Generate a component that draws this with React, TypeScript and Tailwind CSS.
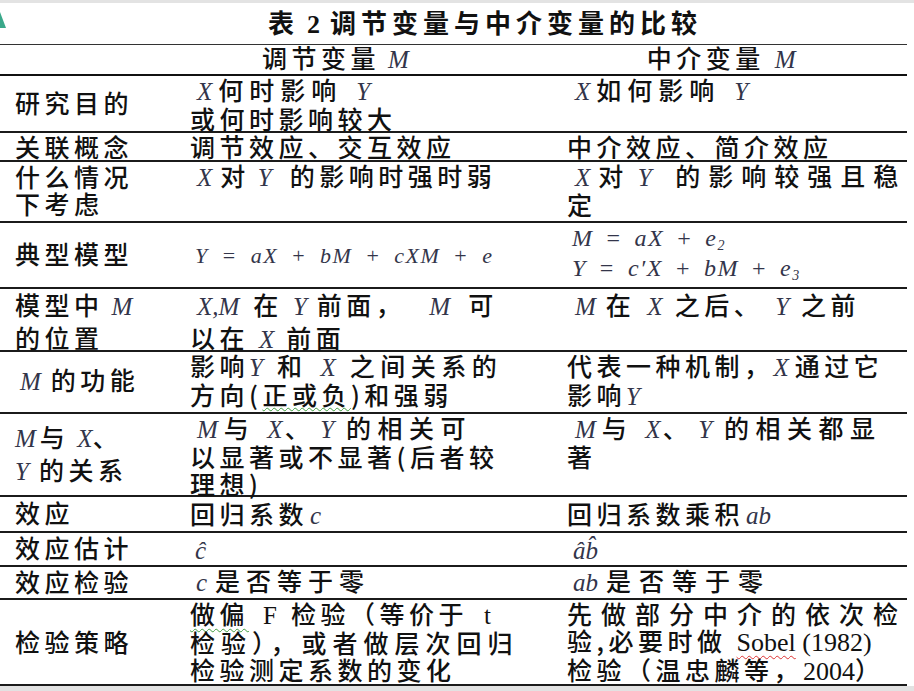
import type { ReactNode } from 'react'

// 数学变量（斜体衬线）
function V({ children, className = '' }: { children: ReactNode; className?: string }) {
  return (
    <span className={`font-['Liberation_Serif',serif] font-normal italic text-[#33354a] tracking-normal text-[25px] ${className}`}>
      {children}
    </span>
  )
}

// 公式中的运算符
function Op({ children, wide }: { children: ReactNode; wide?: boolean }) {
  return <span className={wide ? 'mx-[14px] not-italic' : 'mx-[13px] not-italic'}>{children}</span>
}

interface RowProps {
  h: string
  label: ReactNode
  mid: ReactNode
  right: ReactNode
  midCenter?: boolean
}

function Row({ h, label, mid, right, midCenter }: RowProps) {
  return (
    <div className={`grid grid-cols-[185px_377px_1fr] border-b-2 border-[#1b1b1b] ${h}`}>
      <div className="flex items-center pl-[15px] pb-[3px]">
        <div>{label}</div>
      </div>
      <div className={midCenter ? 'flex items-center pl-[5px]' : 'pl-[5px]'}>{mid}</div>
      <div className="pl-[5px]">{right}</div>
    </div>
  )
}

const serif = "font-['Liberation_Serif',serif] font-normal tracking-normal"

export default function App() {
  return (
    <div className="w-[914px] h-[691px] bg-white flex flex-col text-[25px] font-medium leading-[27px] tracking-[4.5px] text-[#111] font-['Noto_Sans_CJK_SC',sans-serif] whitespace-nowrap overflow-hidden">
      {/* 顶部灰条 */}
      <div className="h-[3px] bg-[#e3e3e3] flex-shrink-0" />

      {/* 标题 */}
      <div className="relative h-[42px] w-[907px] border-b border-[#333] flex items-center pl-[268px] pb-[2px] flex-shrink-0">
        <svg className="absolute left-0 top-[9px]" width="6" height="16" viewBox="0 0 6 16">
          <polygon points="0,0 6,16 0,16" fill="#3aa88a" />
        </svg>
        <span className="text-[26px] font-bold tracking-[5px]">
          表<span className="font-['Liberation_Serif',serif] font-bold tracking-normal ml-[8px] mr-[10px]">2</span>
          调节变量与中介变量的比较
        </span>
      </div>

      <div className="w-[907px] flex flex-col flex-shrink-0">
        {/* 表头 */}
        <div className="h-[31px] border-b-2 border-[#111] flex items-center pb-[2px]">
          <span className="ml-[262px]">
            调节变量<V className="ml-[8px]">M</V>
          </span>
          <span className="ml-[238px]">
            中介变量<V className="ml-[10px]">M</V>
          </span>
        </div>

        <Row
          h="h-[57px]"
          label="研究目的"
          mid={
            <>
              <V className="ml-[7px] mr-[6px]">X</V>
              <span className="tracking-[6px]">何时影响</span>
              <V className="ml-[14px]">Y</V>
              <br />
              或何时影响较大
            </>
          }
          right={
            <>
              <V className="ml-[8px] mr-[6px]">X</V>
              <span className="tracking-[6px]">如何影响</span>
              <V className="ml-[14px]">Y</V>
            </>
          }
        />
        <Row h="h-[29px]" label="关联概念" mid="调节效应、交互效应" right="中介效应、简介效应" />
        <Row
          h="h-[61px]"
          label={
            <>
              什么情况
              <br />
              下考虑
            </>
          }
          mid={
            <>
              <V className="ml-[7px] mr-[8px]">X</V>对<V className="mx-[8px]">Y</V> 的影响时强时弱
            </>
          }
          right={
            <>
              <V className="ml-[8px] mr-[8px]">X</V>对<V className="mx-[10px]">Y</V>
              <span className="tracking-[8px]"> 的影响较强且稳</span>
              <br />
              定
            </>
          }
        />
        <Row
          h="h-[66px]"
          midCenter
          label="典型模型"
          mid={
            <span className="ml-[5px] font-['Liberation_Serif',serif] font-normal italic text-[22px] tracking-[1.5px] text-[#33354a]">
              Y<Op wide>=</Op>aX<Op wide>+</Op>bM<Op wide>+</Op>cXM<Op wide>+</Op>e
            </span>
          }
          right={
            <div className="font-['Liberation_Serif',serif] font-normal italic text-[24px] tracking-[1.5px] text-[#33354a] leading-[30px] pl-[5px]">
              <div>
                M<Op>=</Op>aX<Op>+</Op>e<sub className="text-[14px]">2</sub>
              </div>
              <div>
                Y<Op>=</Op>c′X<Op>+</Op>bM<Op>+</Op>e<sub className="text-[14px]">3</sub>
              </div>
            </div>
          }
        />
        <Row
          h="h-[63px]"
          label={
            <div className="leading-[30px]">
              模型中<V className="ml-[8px]">M</V>
              <br />
              的位置
            </div>
          }
          mid={
            <div className="leading-[30px]">
              <V className="ml-[7px]">X</V>
              <V className="mr-[14px]">,M</V>在<V className="mx-[10px]">Y</V>前面，<V className="ml-[24px] mr-[18px]">M</V>可
              <br />
              以在<V className="ml-[10px] mr-[12px]">X</V>前面
            </div>
          }
          right={
            <div className="leading-[30px]">
              <V className="ml-[8px] mr-[10px]">M</V>在<V className="mx-[12px]">X</V>之后、<V className="mx-[12px]">Y</V>之前
            </div>
          }
        />
        <Row
          h="h-[62px]"
          label={
            <>
              <V className="ml-[5px] mr-[10px]">M</V>的功能
            </>
          }
          mid={
            <>
              影响<V className="mr-[14px]">Y</V>和<V className="ml-[14px] mr-[14px]">X</V>
              <span className="tracking-[5.5px]">之间关系的</span>
              <br />
              方向(
              <span className="underline decoration-wavy decoration-[#3f9c3f] decoration-1 underline-offset-2">正或负</span>
              )和强弱
            </>
          }
          right={
            <>
              代表一种机制，<V className="mr-[6px]">X</V>通过它
              <br />
              影响<V>Y</V>
            </>
          }
        />
        <Row
          h="h-[83px]"
          label={
            <div className="leading-[30px]">
              <V className="mr-[4px]">M</V>与<V className="ml-[8px]">X</V>、
              <br />
              <V className="mr-[10px]">Y</V>的关系
            </div>
          }
          mid={
            <>
              <V className="ml-[7px] mr-[6px]">M</V>与<V className="ml-[14px] mr-[2px]">X</V>、<V className="ml-[6px] mr-[12px]">Y</V>
              <span className="tracking-[6.5px]">的相关可</span>
              <br />
              以显著或不显著(后者较
              <br />
              理想)
            </>
          }
          right={
            <>
              <V className="ml-[8px] mr-[6px]">M</V>与<V className="ml-[14px] mr-[2px]">X</V>、<V className="ml-[6px] mr-[12px]">Y</V>
              <span className="tracking-[6.5px]">的相关都显</span>
              <br />
              著
            </>
          }
        />
        <Row
          h="h-[36px]"
          label="效应"
          mid={
            <div className="pt-[3px]">
              回归系数<V className="ml-[2px]">c</V>
            </div>
          }
          right={
            <div className="pt-[3px]">
              回归系数乘积<V className="ml-[2px]">ab</V>
            </div>
          }
        />
        <Row
          h="h-[34px]"
          label="效应估计"
          mid={
            <div className="pt-[2px]">
              <V className="ml-[5px]">ĉ</V>
            </div>
          }
          right={
            <div className="pt-[2px]">
              <V className="ml-[6px]">âb̂</V>
            </div>
          }
        />
        <Row
          h="h-[33px]"
          label="效应检验"
          mid={
            <>
              <V className="ml-[6px] mr-[8px]">c</V>
              <span className="tracking-[6px]">是否等于零</span>
            </>
          }
          right={
            <>
              <V className="ml-[6px] mr-[8px]">ab</V>
              <span className="tracking-[8px]">是否等于零</span>
            </>
          }
        />
        <Row
          h="h-[86px]"
          label="检验策略"
          mid={
            <>
              <span className="underline decoration-wavy decoration-[#3f9c3f] decoration-1 underline-offset-4">做偏</span>
              <span className={`${serif} mx-[14px]`}>F</span>
              检验（等价于
              <span className={`${serif} ml-[16px]`}>t</span>
              <br />
              <span className="tracking-[6px]">检验），或者做层次回归</span>
              <br />
              检验测定系数的变化
            </>
          }
          right={
            <>
              <span className="tracking-[9px]">先做部分中介的依次检</span>
              <br />
              验,必要时做{' '}
              <span className={`${serif} text-[26px] tracking-[1.5px]`}>
                <span className="underline decoration-wavy decoration-[#d33] decoration-1 underline-offset-4">Sobel</span> (1982)
              </span>
              <br />
              检验（温忠麟等，<span className={`${serif} text-[26px] tracking-[2px]`}>2004</span>）
            </>
          }
        />
      </div>

      {/* 底部灰色区域 */}
      <div className="flex-1 bg-[#e2e2e2]" />
    </div>
  )
}
